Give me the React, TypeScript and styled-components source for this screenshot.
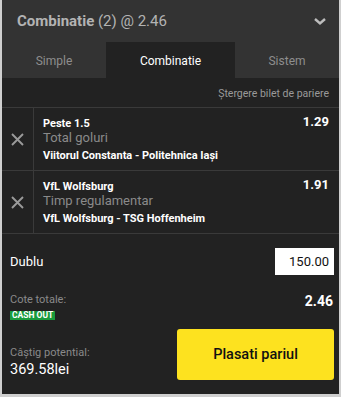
import React from "react";
import styled, { createGlobalStyle } from "styled-components";

const Global = createGlobalStyle`
  html, body { margin: 0; padding: 0; background: #cfcfcf; }
  body { font-family: Roboto, "Liberation Sans", Arial, sans-serif; }
  * { box-sizing: border-box; }
`;

const Panel = styled.div`
  width: 337px;
  height: 394px;
  margin: 0 2px;
  background: #222222;
  display: flex;
  flex-direction: column;
  overflow: hidden;
`;

const Header = styled.div`
  height: 42px;
  background: #333333;
  display: flex;
  align-items: center;
  justify-content: space-between;
  padding: 0 12px 0 15px;
  font-size: 15px;
  color: #b3b3b3;
`;

const Title = styled.div`
  b { font-weight: 700; }
`;

const Tabs = styled.div`
  height: 36px;
  background: #333333;
  display: grid;
  grid-template-columns: 104px 129px 1fr;
`;

const Tab = styled.div<{ $active?: boolean }>`
  display: flex;
  align-items: center;
  justify-content: center;
  font-size: 12px;
  padding-top: 2px;
  background: ${(p) => (p.$active ? "#222222" : "transparent")};
  color: ${(p) => (p.$active ? "#ffffff" : "#8e8e8e")};
`;

const ClearRow = styled.div`
  height: 30px;
  display: flex;
  align-items: center;
  justify-content: flex-end;
  padding: 1px 10px 0 0;
  font-size: 10.5px;
  color: #9a9a9a;
  border-bottom: 1px solid #3a3a3a;
`;

const Selection = styled.div`
  height: 63px;
  display: flex;
  border-bottom: 1px solid #3a3a3a;
`;

const RemoveCell = styled.div`
  width: 32px;
  display: flex;
  align-items: center;
  justify-content: center;
  border-right: 1px solid #3a3a3a;
`;

const SelBody = styled.div`
  flex: 1;
  padding: 9px 10px 0 9px;
  display: flex;
  justify-content: space-between;
  align-items: flex-start;
`;

const SelText = styled.div`
  display: flex;
  flex-direction: column;
`;

const Pick = styled.div`
  font-size: 11px;
  font-weight: 700;
  color: #ffffff;
  line-height: 13px;
`;

const Market = styled.div`
  font-size: 13px;
  color: #8a8a8a;
  line-height: 15px;
  margin-bottom: 4px;
`;

const Event = styled.div`
  font-size: 11px;
  font-weight: 700;
  color: #ffffff;
  line-height: 14px;
`;

const Odds = styled.div`
  font-size: 13px;
  font-weight: 700;
  color: #ffffff;
  line-height: 14px;
  margin-top: -2px;
`;

const StakeRow = styled.div`
  height: 54px;
  display: flex;
  align-items: center;
  justify-content: space-between;
  padding: 0 5px 0 8px;
  font-size: 13px;
  color: #ffffff;
`;

const StakeInput = styled.div`
  width: 59px;
  height: 27px;
  background: #ffffff;
  color: #111111;
  font-size: 13px;
  display: flex;
  align-items: center;
  justify-content: flex-end;
  padding-right: 5px;
`;

const Summary = styled.div`
  flex: 1;
  display: grid;
  grid-template-columns: 1fr 157px;
  padding: 5px 5px 14px 8px;
`;

const Left = styled.div`
  display: flex;
  flex-direction: column;
`;

const Label = styled.div<{ $push?: boolean }>`
  font-size: 11px;
  color: #8a8a8a;
  line-height: 14px;
  margin-top: ${(p) => (p.$push ? "auto" : "0")};
`;

const Badge = styled.span`
  align-self: flex-start;
  margin-top: 4px;
  background: #199a3c;
  color: #ffffff;
  font-size: 8.5px;
  font-weight: 700;
  line-height: 9px;
  padding: 0 2px;
`;

const Win = styled.div`
  font-size: 14.5px;
  color: #ffffff;
  line-height: 17px;
  margin: 1px 0 2px;
`;

const Right = styled.div`
  display: flex;
  flex-direction: column;
  align-items: flex-end;
`;

const Total = styled.div`
  font-size: 14px;
  font-weight: 700;
  color: #ffffff;
  line-height: 16px;
  padding-right: 1px;
`;

const PlaceButton = styled.button`
  margin-top: auto;
  width: 157px;
  height: 51px;
  border: none;
  border-radius: 3px;
  background: #fde21f;
  color: #111111;
  font-family: inherit;
  font-size: 14.5px;
  font-weight: 500;
`;

const Chevron = () => (
  <svg width="14" height="9" viewBox="0 0 14 9">
    <path d="M2 2 L7 6.5 L12 2" stroke="#bdbdbd" strokeWidth="2.4" fill="none" />
  </svg>
);

const Cross = () => (
  <svg width="13" height="13" viewBox="0 0 13 13">
    <path d="M1 1 L12 12 M12 1 L1 12" stroke="#9a9a9a" strokeWidth="1.9" />
  </svg>
);

const selections = [
  { pick: "Peste 1.5", market: "Total goluri", event: "Viitorul Constanta - Politehnica Iași", odds: "1.29" },
  { pick: "VfL Wolfsburg", market: "Timp regulamentar", event: "VfL Wolfsburg - TSG Hoffenheim", odds: "1.91" },
];

export default function App() {
  return (
    <>
      <Global />
      <Panel>
        <Header>
          <Title>
            <b>Combinatie</b> (2) @ 2.46
          </Title>
          <Chevron />
        </Header>
        <Tabs>
          <Tab>Simple</Tab>
          <Tab $active>Combinatie</Tab>
          <Tab>Sistem</Tab>
        </Tabs>
        <ClearRow>Ștergere bilet de pariere</ClearRow>
        {selections.map((s) => (
          <Selection key={s.pick}>
            <RemoveCell>
              <Cross />
            </RemoveCell>
            <SelBody>
              <SelText>
                <Pick>{s.pick}</Pick>
                <Market>{s.market}</Market>
                <Event>{s.event}</Event>
              </SelText>
              <Odds>{s.odds}</Odds>
            </SelBody>
          </Selection>
        ))}
        <StakeRow>
          <span>Dublu</span>
          <StakeInput>150.00</StakeInput>
        </StakeRow>
        <Summary>
          <Left>
            <Label>Cote totale:</Label>
            <Badge>CASH OUT</Badge>
            <Label $push>Câștig potential:</Label>
            <Win>369.58lei</Win>
          </Left>
          <Right>
            <Total>2.46</Total>
            <PlaceButton>Plasati pariul</PlaceButton>
          </Right>
        </Summary>
      </Panel>
    </>
  );
}
